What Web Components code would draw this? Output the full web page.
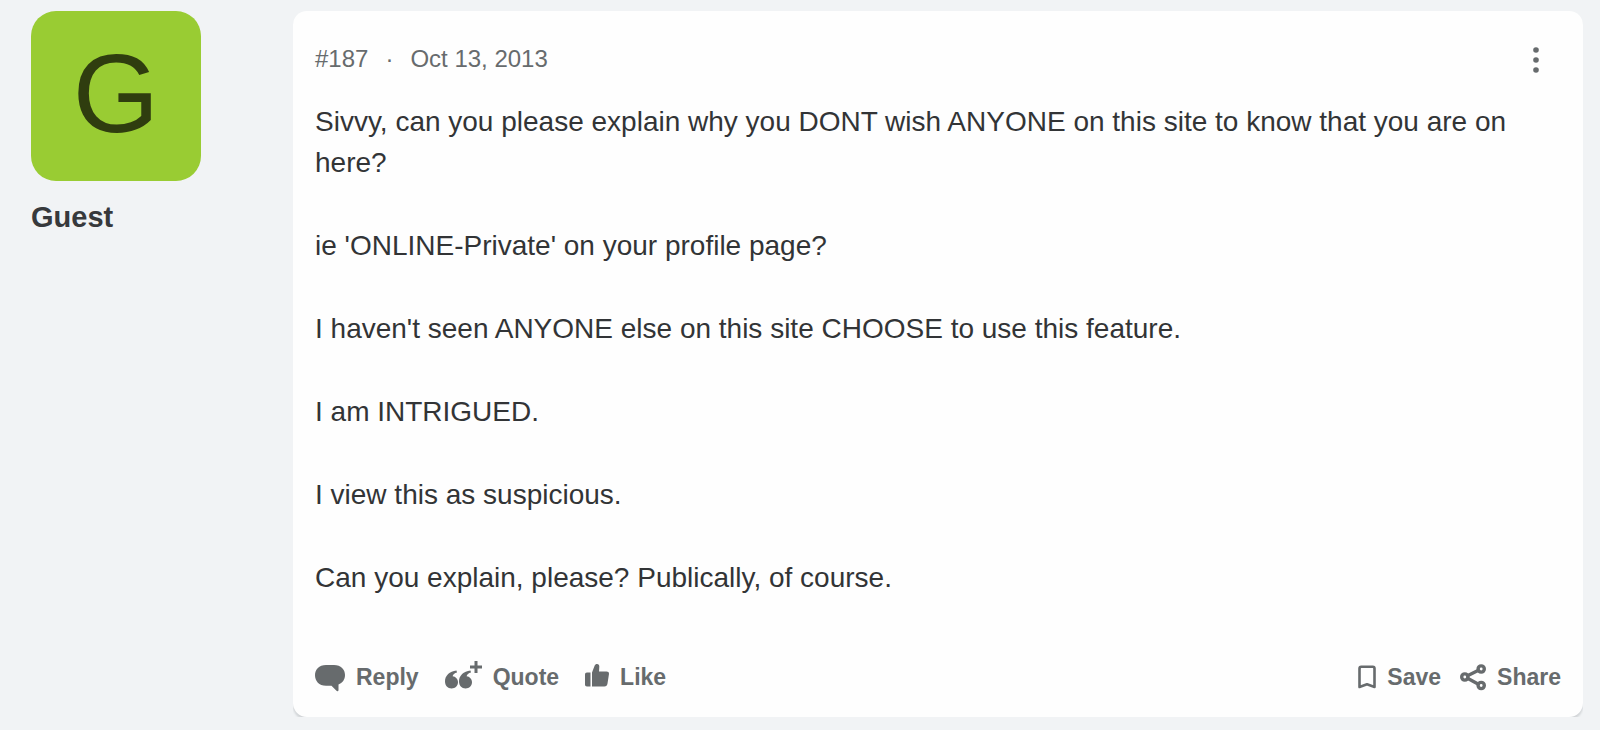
<!DOCTYPE html>
<html lang="en">
<head>
<meta charset="utf-8">
<title>Forum post</title>
<style>
  body { margin: 0; background: #f1f3f5; font-family: "Liberation Sans", Arial, Helvetica, sans-serif; }
</style>
</head>
<body>
<forum-post>
  <guest-badge slot="author" initial="G">Guest</guest-badge>
  <post-meta slot="meta" number="#187" date="Oct 13, 2013"></post-meta>
  <post-text slot="body">
    <p>Sivvy, can you please explain why you DONT wish ANYONE on this site to know that you are on here?</p>
    <p>ie 'ONLINE-Private' on your profile page?</p>
    <p>I haven't seen ANYONE else on this site CHOOSE to use this feature.</p>
    <p>I am INTRIGUED.</p>
    <p>I view this as suspicious.</p>
    <p>Can you explain, please? Publically, of course.</p>
  </post-text>
  <post-action slot="actions" icon="reply">Reply</post-action>
  <post-action slot="actions" icon="quote">Quote</post-action>
  <post-action slot="actions" icon="like">Like</post-action>
  <post-action slot="tools" icon="save">Save</post-action>
  <post-action slot="tools" icon="share">Share</post-action>
</forum-post>
<script>
  const mount = (el, html) => { el.attachShadow({ mode: "open" }).innerHTML = html; };

  customElements.define("forum-post", class extends HTMLElement {
    constructor() {
      super();
      mount(this, `
        <style>
          :host { display: grid; grid-template-columns: 170px minmax(0, 1fr); column-gap: 92px; padding: 11px 17px 13px 31px; align-items: start; }
          /* The clip keeps the shadow to the two bottom corners. */
          article { background: #fefefe; border-radius: 14px; padding: 32px 22px 23px; box-shadow: 0 3px 2px #d3d6d9; clip-path: inset(0); }
          footer { display: flex; justify-content: space-between; margin-top: 62px; }
          .group { display: flex; gap: 26px; }
          .tools { gap: 19px; }
        </style>
        <slot name="author"></slot>
        <article>
          <slot name="meta"></slot>
          <slot name="body"></slot>
          <footer>
            <div class="group"><slot name="actions"></slot></div>
            <div class="group tools"><slot name="tools"></slot></div>
          </footer>
        </article>`);
    }
  });

  customElements.define("guest-badge", class extends HTMLElement {
    constructor() {
      super();
      mount(this, `
        <style>
          :host { display: block; }
          .avatar { display: flex; align-items: center; justify-content: center; height: 166px; padding-bottom: 4px; border-radius: 25px; background: #99cc33; color: #2f3d0f; font-size: 111px; line-height: 1; }
          .name { margin-top: 19px; font-size: 29px; line-height: 34px; font-weight: 700; color: #37393c; }
        </style>
        <div class="avatar">${this.getAttribute("initial")}</div>
        <div class="name"><slot></slot></div>`);
    }
  });

  customElements.define("post-meta", class extends HTMLElement {
    constructor() {
      super();
      mount(this, `
        <style>
          :host { display: flex; align-items: center; color: #676b6d; font-size: 24px; line-height: 32px; }
          .dot { margin: 0 17px; }
          button { margin-left: auto; width: 50px; height: 32px; padding: 0; border: 0; background: none; color: inherit; }
          svg { display: block; margin: 0 auto; }
        </style>
        <span>${this.getAttribute("number")}</span>
        <span class="dot">·</span>
        <time datetime="2013-10-13">${this.getAttribute("date")}</time>
        <button type="button" aria-label="More options">
          <svg width="8" height="32" viewBox="0 0 8 32" fill="currentColor"><circle cx="4" cy="7" r="2.800"/><circle cx="4" cy="17" r="2.800"/><circle cx="4" cy="27" r="2.800"/></svg>
        </button>`);
    }
  });

  customElements.define("post-text", class extends HTMLElement {
    constructor() {
      super();
      mount(this, `
        <style>
          :host { display: flex; flex-direction: column; gap: 42px; margin-top: 26px; color: #323436; font-size: 28px; line-height: 41px; }
          ::slotted(p) { margin: 0; }
        </style>
        <slot></slot>`);
    }
  });

  const icons = {
    reply: [30, `<path fill="currentColor" d="M11 5H19C26 5 30 9.500 30 15C30 19.500 27.500 23 23.500 24.500V30C23.500 31.300 22.300 31.600 21.500 30.800L16.500 25.800H11C4 25.800 0 21 0 15.300S4 5 11 5Z"/>`],
    quote: [37, `<g fill="currentColor"><path d="M11.500 10.500L12 12.500C9.500 13.200 8 14.400 7.600 16.300C10.600 16.600 13 19 13 22.300C13 26 10.200 28.500 6.600 28.500C2.600 28.500 0 25.600 0 21.300C0 15.700 4.500 11.300 11.500 10.500Z"/><path d="M25.500 10.500L26 12.500C23.500 13.200 22 14.400 21.600 16.300C24.600 16.600 27 19 27 22.300C27 26 24.200 28.500 20.600 28.500C16.600 28.500 14 25.600 14 21.300C14 15.700 18.500 11.300 25.500 10.500Z"/></g><path fill="none" stroke="currentColor" stroke-width="3" d="M31 1V13M25 7H37"/>`],
    like: [24, `<g fill="currentColor"><path d="M2 12.500H5.500V26.500H2C.700 26.500 0 25.800 0 24.500V14.500C0 13.200.700 12.500 2 12.500Z"/><path d="M7 26.500V12.500L9.500 6C10.100 4.500 11 4 12 4C13.700 4 14.400 5.200 14.300 6.800L14 11.500H21.500C23.400 11.500 24.300 12.800 23.900 14.500L22.500 23.500C22.200 25.500 21.300 26.500 19.300 26.500Z"/></g>`],
    save: [18, `<path fill="none" stroke="currentColor" stroke-width="2.600" stroke-linejoin="round" d="M1.500 27V8.500Q1.500 6.800 3.200 6.800H14.800Q16.500 6.800 16.500 8.500V27L9 24.300Z"/>`],
    share: [26, `<g fill="none" stroke="currentColor" stroke-width="3.400"><circle cx="4.800" cy="17" r="3.100"/><circle cx="21.200" cy="9" r="3.100"/><circle cx="21.200" cy="25.500" r="3.100"/><path d="M8 15.500L18 10.500M8 18.500L18 24"/></g>`]
  };

  customElements.define("post-action", class extends HTMLElement {
    constructor() {
      super();
      const [width, art] = icons[this.getAttribute("icon")];
      mount(this, `
        <style>
          :host { display: block; }
          button { display: flex; align-items: center; gap: 11px; padding: 0; border: 0; background: none; color: #676b6d; font: 700 23px/34px "Liberation Sans", Arial, sans-serif; }
          svg { display: block; }
        </style>
        <button type="button"><svg width="${width}" height="34" viewBox="0 0 ${width} 34" aria-hidden="true">${art}</svg><slot></slot></button>`);
    }
  });
</script>
</body>
</html>
